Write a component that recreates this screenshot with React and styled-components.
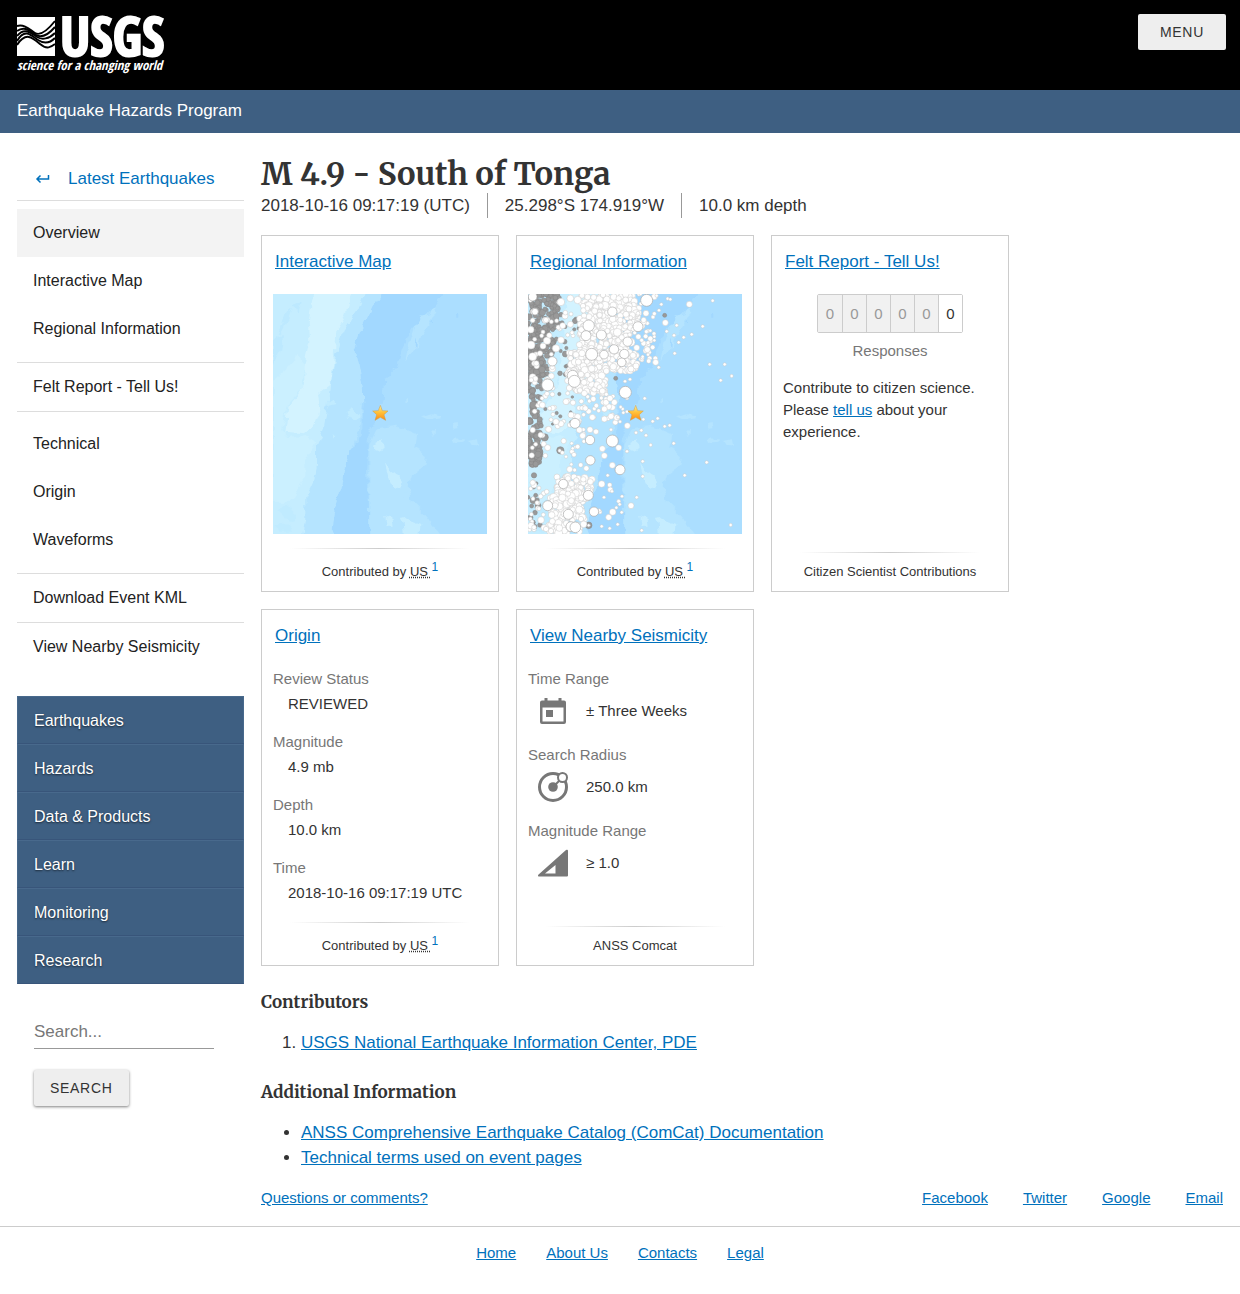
import React from 'react';
import styled, { createGlobalStyle } from 'styled-components';

const EVENT_PAGES = ['Overview', 'Interactive Map', 'Regional Information'];
const TECHNICAL_PAGES = ['Technical', 'Origin', 'Waveforms'];
const SITE_PAGES = ['Earthquakes', 'Hazards', 'Data & Products', 'Learn', 'Monitoring', 'Research'];
const SOCIAL = ['Facebook', 'Twitter', 'Google', 'Email'];
const FOOTER_LINKS = ['Home', 'About Us', 'Contacts', 'Legal'];
const ORIGIN = [
    ['Review Status', 'REVIEWED'],
    ['Magnitude', '4.9 mb'],
    ['Depth', '10.0 km'],
    ['Time', '2018-10-16 09:17:19 UTC'],
];

// x, y, radius of the larger events on the regional map
const BIG_QUAKES = [
    [392, 46, 18], [289, 80, 14], [366, 125, 15], [218, 122, 17], [210, 152, 15], [256, 150, 15], [335, 170, 14],
    [227, 208, 18], [294, 193, 14], [325, 207, 14], [264, 209, 13], [317, 232, 13], [109, 229, 14],
    [95, 300, 18], [170, 272, 16], [175, 289, 18], [328, 322, 18], [177, 415, 15], [222, 465, 14],
    [289, 468, 18], [223, 526, 14], [312, 554, 15], [217, 631, 15], [234, 680, 14], [157, 688, 15],
    [165, 725, 15], [178, 727, 16], [95, 662, 15], [142, 597, 14], [50, 35, 13], [57, 80, 10],
];

const MEDIUM_QUAKES = [
    [419, 232, 9], [345, 662, 9], [520, 58, 9], [289, 541, 9], [448, 113, 9], [278, 697, 9],
    [290, 681, 10], [259, 491, 9], [265, 512, 9], [161, 553, 9], [334, 422, 9], [394, 194, 9],
    [208, 370, 8], [143, 468, 8], [95, 488, 9], [308, 488, 9], [257, 597, 10], [362, 188, 9],
    [120, 410, 9], [98, 433, 9], [79, 360, 9], [278, 365, 9], [295, 352, 9], [229, 397, 9],
    [415, 35, 9], [390, 85, 9], [383, 105, 8], [360, 243, 9], [345, 252, 9], [200, 452, 9],
    [150, 350, 9], [185, 395, 9], [190, 435, 9], [165, 390, 9], [265, 402, 9], [205, 325, 9],
    [270, 352, 9], [282, 340, 9], [265, 372, 9], [285, 394, 9], [120, 190, 11], [135, 165, 10],
    [45, 180, 12], [50, 215, 12], [163, 40, 10], [185, 45, 11], [163, 118, 9], [140, 122, 9],
];

const SMALL_QUAKES = [
    [590, 47], [560, 124], [527, 148], [503, 157], [488, 172], [476, 205], [581, 238], [626, 238],
    [647, 273], [614, 286], [482, 121], [474, 151], [386, 340], [425, 400], [410, 409], [446, 424],
    [461, 421], [473, 475], [404, 480], [380, 529], [380, 574], [506, 571], [572, 532], [333, 499],
    [362, 637], [318, 634], [311, 658], [264, 637], [257, 724], [281, 730], [305, 718], [377, 736],
    [644, 720], [382, 403], [376, 436], [390, 451], [360, 443], [452, 139], [455, 41], [463, 43],
    [428, 247], [380, 215], [396, 209], [415, 155], [415, 166], [403, 137], [436, 58], [429, 76],
    [333, 340], [320, 372], [322, 383], [306, 397], [312, 410], [285, 434], [275, 571], [317, 682],
    [374, 27], [422, 32], [333, 380], [327, 289], [342, 283], [314, 366], [170, 490], [150, 515],
];

// y from, y to, x from, x to, how many, smallest and largest radius
const GREY_BANDS = [
    [27, 130, 36, 130, 95, 6, 14],
    [130, 210, 36, 115, 75, 6, 13],
    [210, 280, 36, 95, 50, 6, 13],
    [30, 280, 110, 205, 24, 5, 10],
    [280, 460, 36, 78, 46, 6, 12],
    [440, 540, 36, 72, 60, 7, 12],
    [540, 740, 36, 80, 18, 5, 10],
    [300, 480, 80, 190, 10, 4, 7],
];

const WHITE_BANDS = [
    [27, 80, 235, 355, 90, 8, 13],
    [27, 80, 180, 250, 22, 7, 12],
    [60, 130, 190, 375, 135, 8, 13],
    [120, 210, 190, 345, 175, 8, 14],
    [200, 260, 158, 365, 130, 8, 12],
    [250, 325, 155, 272, 105, 8, 12],
    [27, 240, 340, 420, 34, 6, 9],
    [30, 300, 40, 180, 40, 6, 12],
    [320, 440, 110, 310, 42, 6, 10],
    [280, 520, 40, 110, 24, 6, 10],
    [430, 560, 130, 240, 14, 5, 8],
    [575, 640, 118, 228, 85, 8, 12],
    [620, 745, 100, 210, 160, 8, 13],
    [580, 740, 36, 100, 24, 6, 11],
    [590, 700, 230, 310, 8, 5, 9],
];

// fixed seed, so that the map is drawn the same on every load
const scatter = (bands, start) => {
    let seed = start;
    const next = () => {
        seed = (seed * 16807) % 2147483647;
        return seed / 2147483647;
    };
    return bands.flatMap(([y0, y1, x0, x1, count, r0, r1]) =>
        Array.from({ length: count }, () => [
            Math.round(x0 + next() * (x1 - x0)),
            Math.round(y0 + next() * (y1 - y0)),
            Math.round(r0 + next() * next() * (r1 - r0)),
        ])
    );
};

const GREY_QUAKES = scatter(GREY_BANDS, 4711).concat([[446, 91, 6], [133, 496, 11], [218, 721, 10], [148, 207, 9], [86, 457, 11], [299, 280, 6]]);
const WHITE_QUAKES = scatter(WHITE_BANDS, 1907);

const Ocean = ({ id }) => (
    <>
        <defs>
            <filter id={`${id}-coast`} x="-10%" y="-10%" width="120%" height="120%">
                <feTurbulence type="fractalNoise" baseFrequency="0.04" numOctaves="2" seed="8" />
                <feDisplacementMap in="SourceGraphic" scale="24" xChannelSelector="R" yChannelSelector="G" />
            </filter>
            <linearGradient id={`${id}-star`} x1="0" y1="0" x2="0" y2="1">
                <stop offset="0" stopColor="#fff0a0" />
                <stop offset="0.45" stopColor="#ffc33c" />
                <stop offset="1" stopColor="#ff8a10" />
            </linearGradient>
        </defs>
        <rect x="0" y="0" width="720" height="780" fill="#abdeff" />
        <g filter={`url(#${id}-coast)`}>
            <path fill="#a2d8ff" d="M365 0H560L520 60 495 85 450 130 420 190 405 245 370 285 365 340 345 400 320 440 320 480 315 560 320 640 322 780H200L215 680 235 610 245 560 270 490 300 450 305 350 290 240 275 190 300 130 330 70Z" />
            <path fill="#b5e4ff" d="M0 0H385L330 70 300 130 275 190 290 240 303 310 303 350 290 440 270 490 245 560 235 610 215 680 205 780H0Z" />
            <path fill="#c5edff" d="M0 0H315L290 70 250 130 235 170 215 240 205 320 185 430 165 480 165 540 150 600 130 640 130 700 115 780H0Z" />
            <path fill="#d3f3ff" d="M158 0H275L250 90 220 140 215 220 205 300 165 330 175 380 160 420 125 445 70 440 75 400 80 360 110 325 130 290 130 240 145 170 140 110Z" />
            <path fill="#cbf0ff" d="M33 290 75 250 110 210 130 240 120 310 80 350 60 430 80 460 130 450 160 470 130 530 130 580 90 650 33 650Z" />
            <path fill="#bde9ff" d="M60 140 75 110 90 60 70 90 50 150ZM33 170 60 150 55 190 33 240ZM95 60 120 50 110 85Z" />
            <path fill="#b5e4ff" d="M322 480 345 430 400 422 465 450 460 490 495 510 490 540 450 570 440 610 450 650 490 690 560 780H322Z" />
            <path fill="#c5edff" d="M368 532 388 555 420 580 408 614 390 605 380 580ZM330 480 360 462 362 492 345 500ZM415 690 435 705 475 720 470 780H430L425 710ZM370 700 390 690 395 725 375 725Z" />
            <path fill="#b5e4ff" d="M455 130 475 100 500 90 515 65 520 80 500 120 480 150 465 190 445 210 430 225 440 180ZM425 620 445 620 445 650 425 640ZM480 395 510 385 535 390 540 400 500 405ZM570 410 590 408 592 432 572 435ZM568 462 605 460 605 470 570 474ZM620 465 645 460 648 485 630 482ZM510 440 522 430 520 455ZM430 340 438 340 438 352 430 350Z" />
            <path fill="#c0ebff" d="M195 355 215 345 220 360 200 365ZM250 380 270 370 290 395 275 405 255 400ZM205 455 220 455 218 465ZM50 675 70 660 105 690 100 710 70 700ZM40 720 80 715 90 740 45 740Z" />
            <path fill="#a2d8ff" d="M582 88 592 86 592 98 583 98ZM508 112 514 106 512 122ZM455 180 462 160 460 195Z" />
        </g>
    </>
);

const Star = ({ id }) => (
    <path
        d="M355 361 361 377 378 378 366 389 371 406 355 397 339 406 344 389 332 378 349 377Z"
        fill={`url(#${id}-star)`}
        stroke="#c89c50"
        strokeWidth="1.500"
        strokeLinejoin="round"
    />
);

const InteractiveMap = () => (
    <MapPicture viewBox="33 27 642 720" role="img" aria-label="Map of the epicenter">
        <Ocean id="interactive" />
        <Star id="interactive" />
    </MapPicture>
);

const RegionalMap = () => (
    <MapPicture viewBox="33 27 642 720" role="img" aria-label="Map of regional seismicity">
        <Ocean id="regional" />
        <g transform="translate(-3 0)">
            <g fill="#999" stroke="#858585" strokeWidth="1.500">
                {GREY_QUAKES.map(([x, y, r], i) => <circle key={i} cx={x} cy={y} r={r} />)}
            </g>
            <g fill="#fff" stroke="#c8c8c8" strokeWidth="1.500">
                {WHITE_QUAKES.map(([x, y, r], i) => <circle key={i} cx={x} cy={y} r={r} />)}
                {MEDIUM_QUAKES.map(([x, y, r], i) => <circle key={i} cx={x} cy={y} r={r} />)}
                {SMALL_QUAKES.map(([x, y], i) => <circle key={i} cx={x} cy={y} r="5" />)}
            </g>
            <g fill="#fff" stroke="#aaa" strokeWidth="2">
                {BIG_QUAKES.map(([x, y, r], i) => <circle key={i} cx={x} cy={y} r={r} />)}
                <circle cx="218" cy="721" r="5" />
            </g>
        </g>
        <g transform="translate(1 0)">
            <Star id="regional" />
        </g>
    </MapPicture>
);

const Logo = () => (
    <LogoPicture viewBox="0 0 156 60" role="img" aria-label="USGS science for a changing world">
        <rect width="38" height="39" y="1" fill="#fff" />
        <g fill="none" stroke="#000" strokeWidth="2">
            <path d="M0 10C8 8 13 14 18 17S30 15 38 5" />
            <path d="M0 15C8 9 14 16 19 19S31 19 38 11" />
            <path d="M0 20C8 10 15 18 20 21S32 23 38 17" />
            <path d="M0 25C8 11 15 20 21 24S33 27 38 22" />
            <path d="M0 29C9 15 16 22 23 28S34 31 38 28" />
        </g>
        <LogoName x="43" y="40">USGS</LogoName>
        <LogoTagline x="0" y="54">science for a changing world</LogoTagline>
    </LogoPicture>
);

const CalendarIcon = () => (
    <RangeIcon viewBox="0 0 36 36">
        <path fillRule="evenodd" d="M9.500 5h3v2.500h11V5h3v2.500H29a2 2 0 0 1 2 2V29a2 2 0 0 1-2 2H7a2 2 0 0 1-2-2V9.500a2 2 0 0 1 2-2h2.500zM7.500 14.500v14h21v-14zM11 17h7v7h-7z" />
    </RangeIcon>
);

const RadiusIcon = () => (
    <RangeIcon viewBox="0 0 36 36">
        <circle cx="18" cy="18" r="13.500" fill="none" stroke="#777" strokeWidth="3" />
        <circle cx="18" cy="18" r="4.800" />
        <path d="M18 18 24 12" stroke="#777" strokeWidth="2" />
        <circle cx="27.500" cy="8.500" r="4.500" fill="#fff" stroke="#777" strokeWidth="2" />
    </RangeIcon>
);

const MagnitudeIcon = () => (
    <RangeIcon viewBox="0 0 36 36">
        <path fillRule="evenodd" d="M4 31.500a1 1 0 0 1-.700-1.700L31 5a1.200 1.200 0 0 1 2 1v24.500a1 1 0 0 1-1 1zM10 28.500h10.500V20z" />
    </RangeIcon>
);

const Contributed = () => (
    <CardFooter>
        Contributed by <abbr title="USGS National Earthquake Information Center, PDE">US </abbr>
        <sup><a href="#contributors">1</a></sup>
    </CardFooter>
);

const Card = ({ title, children, footer }) => (
    <CardBox>
        <CardTitle><a href="#card">{title}</a></CardTitle>
        {children}
        {footer}
    </CardBox>
);

const App = () => {
    return (
        <>
            <GlobalStyle />
            <Header>
                <LogoLink href="#home"><Logo /></LogoLink>
                <Button type="button" $wide>MENU</Button>
            </Header>
            <ProgramBar><a href="#program">Earthquake Hazards Program</a></ProgramBar>

            <Page>
                <Sidebar>
                    <nav aria-label="Event">
                        <BackLink href="#latest">
                            <svg width="15" height="12" viewBox="0 0 15 12" fill="none" stroke="currentColor" strokeWidth="1.500">
                                <path d="M13.500 2v4H2M5.500 2.500 2 6 5.500 9.500" />
                            </svg>
                            Latest Earthquakes
                        </BackLink>
                        <NavGroup>
                            {EVENT_PAGES.map((name, i) => <NavLink key={name} href="#page" $active={i === 0}>{name}</NavLink>)}
                        </NavGroup>
                        <NavGroup $tight><NavLink href="#dyfi">Felt Report - Tell Us!</NavLink></NavGroup>
                        <NavGroup>
                            {TECHNICAL_PAGES.map((name) => <NavLink key={name} href="#page">{name}</NavLink>)}
                        </NavGroup>
                        <NavGroup $tight><NavLink href="#kml">Download Event KML</NavLink></NavGroup>
                        <NavLink href="#nearby">View Nearby Seismicity</NavLink>
                    </nav>
                    <SiteNav aria-label="Site">
                        {SITE_PAGES.map((name) => <SiteLink key={name} href="#site">{name}</SiteLink>)}
                    </SiteNav>
                    <SearchForm onSubmit={(e) => e.preventDefault()}>
                        <SearchInput type="search" aria-label="Search" placeholder="Search..." />
                        <Button type="submit" $raised>SEARCH</Button>
                    </SearchForm>
                </Sidebar>

                <Main>
                    <Title>M 4.9 - South of Tonga</Title>
                    <Facts>
                        <li>2018-10-16 09:17:19 (UTC)</li>
                        <li>25.298°S 174.919°W</li>
                        <li>10.0 km depth</li>
                    </Facts>

                    <Cards>
                        <Card title="Interactive Map" footer={<Contributed />}><InteractiveMap /></Card>
                        <Card title="Regional Information" footer={<Contributed />}><RegionalMap /></Card>
                        <Card title="Felt Report - Tell Us!" footer={<CardFooter>Citizen Scientist Contributions</CardFooter>}>
                            <Counter>
                                {[0, 1, 2, 3, 4, 5].map((i) => <Digit key={i} $on={i === 5}>0</Digit>)}
                            </Counter>
                            <CounterLabel>Responses</CounterLabel>
                            <CardText>Contribute to citizen science. Please <a href="#dyfi">tell us</a> about your experience.</CardText>
                        </Card>
                        <Card title="Origin" footer={<Contributed />}>
                            <Details>
                                {ORIGIN.map(([label, value]) => (
                                    <div key={label}>
                                        <dt>{label}</dt>
                                        <dd>{value}</dd>
                                    </div>
                                ))}
                            </Details>
                        </Card>
                        <Card title="View Nearby Seismicity" footer={<CardFooter>ANSS Comcat</CardFooter>}>
                            <Ranges>
                                <div>
                                    <dt>Time Range</dt>
                                    <dd><CalendarIcon />± Three Weeks</dd>
                                </div>
                                <div>
                                    <dt>Search Radius</dt>
                                    <dd><RadiusIcon />250.0 km</dd>
                                </div>
                                <div>
                                    <dt>Magnitude Range</dt>
                                    <dd><MagnitudeIcon />≥ 1.0</dd>
                                </div>
                            </Ranges>
                        </Card>
                    </Cards>

                    <Heading id="contributors">Contributors</Heading>
                    <List as="ol">
                        <li><a href="#neic">USGS National Earthquake Information Center, PDE</a></li>
                    </List>
                    <Heading>Additional Information</Heading>
                    <List>
                        <li><a href="#comcat">ANSS Comprehensive Earthquake Catalog (ComCat) Documentation</a></li>
                        <li><a href="#terms">Technical terms used on event pages</a></li>
                    </List>

                    <PageFooter>
                        <a href="#questions">Questions or comments?</a>
                        <Social>
                            {SOCIAL.map((name) => <a key={name} href="#share">{name}</a>)}
                        </Social>
                    </PageFooter>
                </Main>
            </Page>

            <SiteFooter>
                {FOOTER_LINKS.map((name) => <a key={name} href="#footer">{name}</a>)}
            </SiteFooter>
        </>
    );
};

const GlobalStyle = createGlobalStyle`
    * {
        box-sizing: border-box;
    }
    body {
        margin: 0;
        background: #fff;
        color: #333;
        font-family: 'Liberation Sans', Arial, sans-serif;
        font-size: 17px;
        line-height: 25px;
    }
    a {
        color: #0071bc;
    }
`;

const Header = styled.header`
    display: flex;
    justify-content: space-between;
    align-items: flex-start;
    height: 90px;
    padding: 14px 14px 0 17px;
    background: #000;
`;

const LogoLink = styled.a`
    display: block;
    padding-top: 2px;
    line-height: 0;
`;

const LogoPicture = styled.svg`
    width: 156px;
    height: 60px;
    overflow: visible;
`;

const LogoName = styled.text`
    fill: #fff;
    stroke: #fff;
    stroke-width: 2px;
    font-family: 'Open Sans Condensed', 'Liberation Sans Narrow', 'Liberation Sans', sans-serif;
    font-size: 54px;
    font-weight: 700;
`;

const LogoTagline = styled(LogoName)`
    stroke: none;
    font-size: 13px;
    font-style: italic;
`;

const Button = styled.button`
    height: 36px;
    padding: 0 ${({ $wide }) => ($wide ? '22px' : '16px')};
    border: 0;
    border-radius: 2px;
    background: #eee;
    box-shadow: ${({ $raised }) => ($raised ? '0 1px 3px rgba(0, 0, 0, 0.5)' : 'none')};
    color: #333;
    font-family: inherit;
    font-size: 14px;
    letter-spacing: 0.05em;
`;

const ProgramBar = styled.div`
    height: 43px;
    padding: 8px 17px;
    background: #3e5f82;
    a {
        color: #fff;
        text-decoration: none;
    }
`;

const Page = styled.div`
    display: grid;
    grid-template-columns: 227px minmax(0, 1fr);
    column-gap: 17px;
    padding: 0 17px;
`;

const Sidebar = styled.div`
    padding-top: 24px;
`;

const BackLink = styled.a`
    display: flex;
    align-items: center;
    gap: 18px;
    height: 44px;
    padding-left: 18px;
    border-bottom: 1px solid #ddd;
    text-decoration: none;
`;

const NavGroup = styled.div`
    padding: ${({ $tight }) => ($tight ? '0' : '8px 0 9px')};
    border-bottom: 1px solid #ddd;
`;

const NavLink = styled.a`
    display: block;
    padding: 0 16px;
    background: ${({ $active }) => ($active ? '#f3f3f3' : 'transparent')};
    color: #222;
    font-size: 16px;
    line-height: 48px;
    text-decoration: none;
`;

const SiteNav = styled.nav`
    margin-top: 25px;
    background: #3e5f82;
`;

const SiteLink = styled.a`
    display: block;
    padding: 2px 16px 0;
    border: 1px solid #48698c;
    border-bottom-color: #38557a;
    color: #fff;
    font-size: 16px;
    line-height: 44px;
    text-decoration: none;
    text-shadow: 0 1px 2px rgba(0, 0, 0, 0.6);
`;

const SearchForm = styled.form`
    display: flex;
    flex-direction: column;
    align-items: flex-start;
    gap: 21px;
    padding: 30px 30px 0 17px;
`;

const SearchInput = styled.input`
    width: 100%;
    height: 35px;
    padding: 2px 0 0;
    border: 0;
    border-bottom: 1px solid #999;
    background: none;
    color: #333;
    font-family: inherit;
    font-size: 17px;
    appearance: none;
    &::placeholder {
        color: #777;
    }
`;

const Main = styled.main`
    padding-top: 21px;
`;

const Title = styled.h1`
    margin: 0;
    font-family: Merriweather, 'DejaVu Serif', serif;
    font-size: 31px;
    font-weight: 700;
    line-height: 39px;
`;

const Facts = styled.ul`
    display: flex;
    flex-wrap: wrap;
    margin: 0;
    padding: 0;
    list-style: none;
    li + li {
        margin-left: 17px;
        padding-left: 17px;
        border-left: 1px solid #999;
    }
`;

const Cards = styled.div`
    display: flex;
    flex-wrap: wrap;
    gap: 17px;
    margin-top: 17px;
`;

const CardBox = styled.section`
    display: flex;
    flex-direction: column;
    width: 238px;
    min-height: 357px;
    padding: 0 11px 7px;
    border: 1px solid #ccc;
    font-size: 15px;
    line-height: 22px;
`;

const CardTitle = styled.h2`
    margin: 0;
    padding: 13px 2px 20px;
    font-size: 17px;
    font-weight: 400;
    line-height: 25px;
`;

const MapPicture = styled.svg`
    display: block;
    width: 214px;
    height: 240px;
`;

const CardFooter = styled.footer`
    margin-top: auto;
    padding-top: 8px;
    background: linear-gradient(to right, transparent 8%, #ccc 50%, transparent 92%) top / 100% 1px no-repeat;
    font-size: 13px;
    line-height: 24px;
    text-align: center;
    sup {
        font-size: 12px;
        line-height: 22px;
    }
    sup a {
        text-decoration: none;
    }
    abbr {
        white-space: pre;
    }
`;

const Counter = styled.div`
    display: flex;
    align-self: center;
    border: 1px solid #ccc;
    border-radius: 2px;
`;

const Digit = styled.span`
    width: 24px;
    background: ${({ $on }) => ($on ? '#fff' : '#f1f1f1')};
    color: ${({ $on }) => ($on ? '#333' : '#999')};
    line-height: 37px;
    text-align: center;
    & + & {
        border-left: 1px solid #ccc;
    }
`;

const CounterLabel = styled.div`
    margin-top: 7px;
    color: #777;
    text-align: center;
`;

const CardText = styled.p`
    margin: 15px 0 0;
`;

const Details = styled.dl`
    margin: 0;
    dt {
        color: #777;
    }
    dd {
        margin: 3px 0 16px 15px;
    }
    div:last-child dd {
        margin-bottom: 0;
    }
`;

const Ranges = styled(Details)`
    dd {
        display: flex;
        align-items: center;
        gap: 15px;
        height: 42px;
        margin: 0 0 12px 7px;
    }
`;

const RangeIcon = styled.svg`
    width: 36px;
    height: 36px;
    fill: #777;
`;

const Heading = styled.h3`
    margin: 24px 0 0;
    font-family: Merriweather, 'DejaVu Serif', serif;
    font-size: 17px;
    font-weight: 700;
    line-height: 25px;
`;

const List = styled.ul`
    margin: 15px 0 0;
    padding-left: 40px;
    & + ${Heading} {
        margin-top: 25px;
    }
`;

const PageFooter = styled.footer`
    display: flex;
    justify-content: space-between;
    margin-top: 15px;
    padding-bottom: 16px;
    font-size: 15px;
`;

const Social = styled.div`
    display: flex;
    gap: 35px;
`;

const SiteFooter = styled.footer`
    display: flex;
    justify-content: center;
    gap: 30px;
    padding: 13px 17px 28px;
    border-top: 1px solid #ccc;
    font-size: 15px;
`;

export default App;
